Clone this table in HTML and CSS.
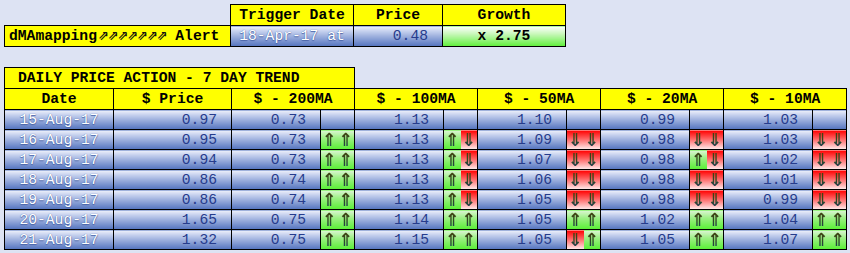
FILE: index.html
```html
<!DOCTYPE html>
<html>
<head>
<meta charset="utf-8">
<link rel="stylesheet" href="styles.css">
</head>
<body>
<table class="top">
  <colgroup><col class="c-alert"><col class="c-trig"><col class="c-price"><col class="c-growth"></colgroup>
  <tr class="r21">
    <td class="blank"></td>
    <td class="hd">Trigger Date</td>
    <td class="hd">Price</td>
    <td class="hd">Growth</td>
  </tr>
  <tr class="r21">
    <td class="hd alert">dMAmapping<span class="upr">⇗⇗⇗⇗⇗⇗⇗</span> Alert</td>
    <td class="bl date">18-Apr-17 at</td>
    <td class="bl num">0.48</td>
    <td class="growth">x 2.75</td>
  </tr>
</table>

<table class="main">
  <colgroup>
    <col class="c-date"><col class="c-p">
    <col class="c-v"><col class="c-a"><col class="c-a">
    <col class="c-v"><col class="c-a"><col class="c-a">
    <col class="c-v"><col class="c-a"><col class="c-a">
    <col class="c-v"><col class="c-a"><col class="c-a">
    <col class="c-v"><col class="c-a"><col class="c-a">
  </colgroup>
  <tr class="r21">
    <td class="hd title" colspan="5">DAILY PRICE ACTION - 7 DAY TREND</td>
    <td class="blank" colspan="12"></td>
  </tr>
  <tr class="r21">
    <td class="hd">Date</td>
    <td class="hd">$ Price</td>
    <td class="hd" colspan="3">$ - 200MA</td>
    <td class="hd" colspan="3">$ - 100MA</td>
    <td class="hd" colspan="3">$ - 50MA</td>
    <td class="hd" colspan="3">$ - 20MA</td>
    <td class="hd" colspan="3">$ - 10MA</td>
  </tr>
  <tr>
    <td class="bl date">15-Aug-17</td><td class="bl num">0.97</td>
    <td class="bl num">0.73</td><td class="bl" colspan="2"></td>
    <td class="bl num">1.13</td><td class="bl" colspan="2"></td>
    <td class="bl num">1.10</td><td class="bl" colspan="2"></td>
    <td class="bl num">0.99</td><td class="bl" colspan="2"></td>
    <td class="bl num">1.03</td><td class="bl" colspan="2"></td>
  </tr>
  <tr>
    <td class="bl date">16-Aug-17</td><td class="bl num">0.95</td>
    <td class="bl num">0.73</td><td class="up l"><span>⇑</span></td><td class="up r"><span>⇑</span></td>
    <td class="bl num">1.13</td><td class="up l"><span>⇑</span></td><td class="dn r"><span>⇓</span></td>
    <td class="bl num">1.09</td><td class="dn l"><span>⇓</span></td><td class="dn r"><span>⇓</span></td>
    <td class="bl num">0.98</td><td class="dn l"><span>⇓</span></td><td class="dn r"><span>⇓</span></td>
    <td class="bl num">1.03</td><td class="dn l"><span>⇓</span></td><td class="dn r"><span>⇓</span></td>
  </tr>
  <tr>
    <td class="bl date">17-Aug-17</td><td class="bl num">0.94</td>
    <td class="bl num">0.73</td><td class="up l"><span>⇑</span></td><td class="up r"><span>⇑</span></td>
    <td class="bl num">1.13</td><td class="up l"><span>⇑</span></td><td class="dn r"><span>⇓</span></td>
    <td class="bl num">1.07</td><td class="dn l"><span>⇓</span></td><td class="dn r"><span>⇓</span></td>
    <td class="bl num">0.98</td><td class="up l"><span>⇑</span></td><td class="dn r"><span>⇓</span></td>
    <td class="bl num">1.02</td><td class="dn l"><span>⇓</span></td><td class="dn r"><span>⇓</span></td>
  </tr>
  <tr>
    <td class="bl date">18-Aug-17</td><td class="bl num">0.86</td>
    <td class="bl num">0.74</td><td class="up l"><span>⇑</span></td><td class="up r"><span>⇑</span></td>
    <td class="bl num">1.13</td><td class="up l"><span>⇑</span></td><td class="dn r"><span>⇓</span></td>
    <td class="bl num">1.06</td><td class="dn l"><span>⇓</span></td><td class="dn r"><span>⇓</span></td>
    <td class="bl num">0.98</td><td class="dn l"><span>⇓</span></td><td class="dn r"><span>⇓</span></td>
    <td class="bl num">1.01</td><td class="dn l"><span>⇓</span></td><td class="dn r"><span>⇓</span></td>
  </tr>
  <tr>
    <td class="bl date">19-Aug-17</td><td class="bl num">0.86</td>
    <td class="bl num">0.74</td><td class="up l"><span>⇑</span></td><td class="up r"><span>⇑</span></td>
    <td class="bl num">1.13</td><td class="up l"><span>⇑</span></td><td class="dn r"><span>⇓</span></td>
    <td class="bl num">1.05</td><td class="dn l"><span>⇓</span></td><td class="dn r"><span>⇓</span></td>
    <td class="bl num">0.98</td><td class="dn l"><span>⇓</span></td><td class="dn r"><span>⇓</span></td>
    <td class="bl num">0.99</td><td class="dn l"><span>⇓</span></td><td class="dn r"><span>⇓</span></td>
  </tr>
  <tr>
    <td class="bl date">20-Aug-17</td><td class="bl num">1.65</td>
    <td class="bl num">0.75</td><td class="up l"><span>⇑</span></td><td class="up r"><span>⇑</span></td>
    <td class="bl num">1.14</td><td class="up l"><span>⇑</span></td><td class="up r"><span>⇑</span></td>
    <td class="bl num">1.05</td><td class="up l"><span>⇑</span></td><td class="up r"><span>⇑</span></td>
    <td class="bl num">1.02</td><td class="up l"><span>⇑</span></td><td class="up r"><span>⇑</span></td>
    <td class="bl num">1.04</td><td class="up l"><span>⇑</span></td><td class="up r"><span>⇑</span></td>
  </tr>
  <tr>
    <td class="bl date">21-Aug-17</td><td class="bl num">1.32</td>
    <td class="bl num">0.75</td><td class="up l"><span>⇑</span></td><td class="up r"><span>⇑</span></td>
    <td class="bl num">1.15</td><td class="up l"><span>⇑</span></td><td class="up r"><span>⇑</span></td>
    <td class="bl num">1.05</td><td class="dn l"><span>⇓</span></td><td class="up r"><span>⇑</span></td>
    <td class="bl num">1.05</td><td class="up l"><span>⇑</span></td><td class="up r"><span>⇑</span></td>
    <td class="bl num">1.07</td><td class="up l"><span>⇑</span></td><td class="up r"><span>⇑</span></td>
  </tr>
</table>
</body>
</html>
```

FILE: styles.css
```css
html, body {
  margin: 0;
  padding: 0;
  background: #dde3f3;
}
body {
  padding: 4px;
  font-family: "Liberation Mono", "Courier New", monospace;
  font-size: 14.67px;
}
table {
  border-collapse: collapse;
  table-layout: fixed;
}
td {
  border: 1px solid #000;
  padding: 0;
  height: 19px;
  line-height: 18px;
  white-space: nowrap;
  overflow: hidden;
}
tr.r21 td { height: 20px; }
td.blank {
  border: none;
  background: transparent;
}
.top { width: 561px; }
.c-alert { width: 226px; }
.c-trig { width: 123px; }
.c-price { width: 89px; }
.c-growth { width: 123px; }

.main { width: 841px; margin-top: 20px; }
.c-date { width: 109px; }
.c-p { width: 118px; }
.c-v { width: 89px; }
.c-a { width: 17px; }

.hd {
  background: #ffff00;
  font-weight: bold;
  color: #000;
  text-align: center;
}
.alert {
  text-align: left;
  padding-left: 4px;
}
.upr {
  font-family: "DejaVu Sans", sans-serif;
  font-size: 13px;
  font-weight: bold;
  color: #111;
  letter-spacing: -1.1px;
  margin-left: 1px;
}
.title {
  text-align: left;
  padding-left: 13px;
}
.bl {
  background: linear-gradient(to bottom, #eef1fa 0%, #cbd5f0 20%, #9cafdd 50%, #5373be 100%);
}
.date {
  color: #ffffff;
  text-align: center;
  text-shadow: 0 0 1px #3f5aa0, 0 1px 1px #4a64a8;
}
.num {
  color: #263c8c;
  text-align: right;
  padding-right: 14px;
}
.growth {
  background: linear-gradient(to bottom, #ffffff 0%, #c4f7b4 40%, #5ef03a 100%);
  font-weight: bold;
  text-align: center;
  color: #000;
}
.up, .dn {
  text-align: center;
  font-family: "DejaVu Sans", sans-serif;
  font-size: 18px;
  font-weight: bold;
}
.up { background: linear-gradient(to bottom, #dcf5d4 0%, #9cf084 40%, #58f034 100%); }
.dn { background: linear-gradient(to bottom, #ff0000 0%, #ff5a5a 40%, #ffeeee 100%); }
td.l { border-right: none; }
td.r { border-left: none; }
.up span, .dn span {
  background: linear-gradient(to bottom, #4a3f08 0%, #2e4a22 55%, #1a3570 100%);
  -webkit-background-clip: text;
  background-clip: text;
  color: transparent;
}
```
